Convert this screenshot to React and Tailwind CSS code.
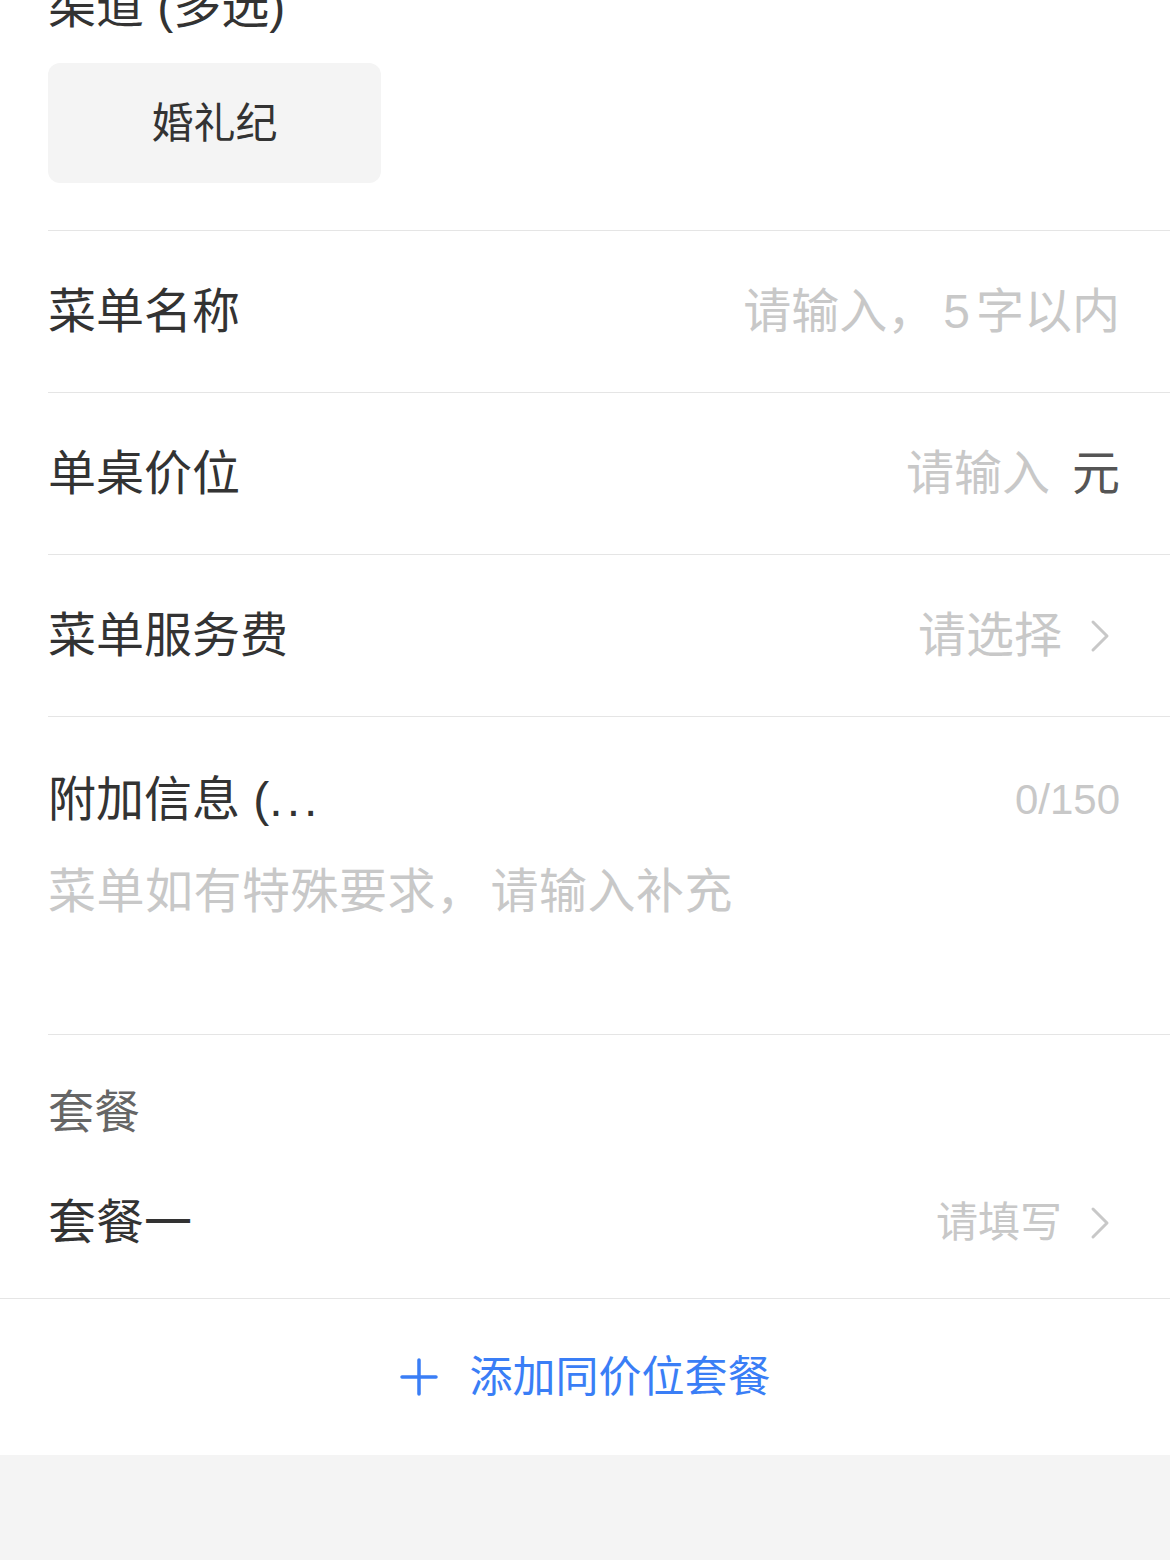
import React from "react";

const Chevron = () => (
  <svg width="30" height="34" viewBox="0 0 30 34" className="ml-[28px] shrink-0">
    <path d="M3 3 L17 17 L3 31" fill="none" stroke="#c8c8c8" strokeWidth="3" strokeLinecap="round" strokeLinejoin="round" />
  </svg>
);

function Row({ label, children }) {
  return (
    <div className="h-[162px] border-t border-[#e5e5e5] flex items-center justify-between pr-[50px]">
      <span className="text-[48px] leading-[56px] text-[#333]">{label}</span>
      <div className="flex items-center">{children}</div>
    </div>
  );
}

export default function App() {
  return (
    <div className="w-[1170px] min-h-[1560px] bg-[#f4f4f4] font-['Liberation_Sans','Noto_Sans_CJK_SC',sans-serif] overflow-hidden">
      <div className="bg-white">
        <div className="pl-12">
          <div className="mt-[-17px] text-[48px] leading-[48px] text-[#333]">渠道 (多选)</div>
          <div className="mt-[32px] mb-[47px] w-[333px] h-[120px] rounded-[12px] bg-[#f4f4f4] flex items-center justify-center text-[42px] text-[#333]">
            婚礼纪
          </div>

          <Row label="菜单名称">
            <span className="text-[48px] leading-[56px] text-[#c8c8c8]">
              请输入，<span className="ml-[8px] mr-[6px]">5</span>字以内
            </span>
          </Row>
          <Row label="单桌价位">
            <span className="text-[48px] leading-[56px] text-[#c8c8c8]">请输入</span>
            <span className="ml-[22px] text-[48px] leading-[56px] text-[#555]">元</span>
          </Row>
          <Row label="菜单服务费">
            <span className="text-[48px] leading-[56px] text-[#c8c8c8]">请选择</span>
            <Chevron />
          </Row>

          <div className="h-[318px] border-t border-[#e5e5e5] pr-[50px] pt-[55px]">
            <div className="flex items-center justify-between">
              <span className="text-[48px] leading-[56px] text-[#333]">
                附加信息 (<span className="tracking-[4px]">...</span>
              </span>
              <span className="text-[42px] leading-[56px] text-[#c8c8c8]">0/150</span>
            </div>
            <div className="mt-[36px] text-[48px] leading-[56px] tracking-[0.5px] text-[#c8c8c8]">
              菜单如有特殊要求，<span className="ml-[6px]">请输入补充</span>
            </div>
          </div>

          <div className="border-t border-[#e5e5e5] pt-[49px]">
            <div className="pb-2 text-[46px] leading-[56px] text-[#666]">套餐</div>
            <div className="h-[150px] flex items-center justify-between pr-[50px]">
              <span className="text-[48px] leading-[56px] text-[#333]">套餐一</span>
              <div className="flex items-center">
                <span className="text-[42px] leading-[56px] text-[#c8c8c8]">请填写</span>
                <Chevron />
              </div>
            </div>
          </div>
        </div>

        <div className="h-[157px] border-t border-[#e5e5e5] flex items-center justify-center">
          <svg width="38" height="38" viewBox="0 0 38 38" className="mr-[32px]">
            <path d="M19 2 V36 M2 19 H36" stroke="#3a7ef6" strokeWidth="3.5" strokeLinecap="round" />
          </svg>
          <span className="text-[43px] leading-[56px] text-[#3a7ef6]">添加同价位套餐</span>
        </div>
      </div>
    </div>
  );
}
